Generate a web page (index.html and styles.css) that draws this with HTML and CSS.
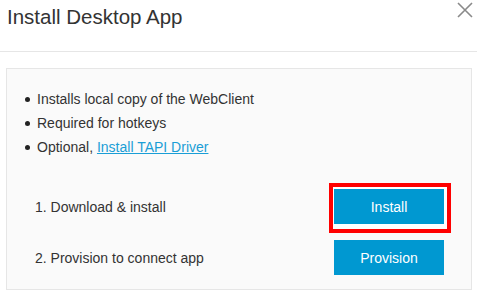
FILE: index.html
```html
<!DOCTYPE html>
<html lang="en">
<head>
    <meta charset="UTF-8">
    <title>Install Desktop App</title>
    <link rel="stylesheet" href="styles.css">
</head>
<body>
    <div class="dialog">
        <div class="dialog-header">
            <h1 class="dialog-title">Install Desktop App</h1>
            <span class="close-btn" aria-label="Close">
                <svg width="16" height="16" viewBox="0 0 16 16">
                    <path d="M1 1 L15 15 M15 1 L1 15" stroke="#8a8a8a" stroke-width="1.6" fill="none"/>
                </svg>
            </span>
        </div>
        <div class="panel">
            <ul class="features">
                <li>Installs local copy of the WebClient</li>
                <li>Required for hotkeys</li>
                <li>Optional, <a href="#" class="link">Install TAPI Driver</a></li>
            </ul>
            <div class="step first">
                <span class="step-label">1. Download &amp; install</span>
                <span class="highlight"><button class="btn">Install</button></span>
            </div>
            <div class="step">
                <span class="step-label">2. Provision to connect app</span>
                <button class="btn">Provision</button>
            </div>
        </div>
    </div>
</body>
</html>
```

FILE: styles.css
```css
body {
    margin: 0;
    font-family: 'Liberation Sans', Arial, sans-serif;
    color: #333;
    background: #fff;
}
.dialog {
    width: 477px;
}
.dialog-header {
    display: flex;
    justify-content: space-between;
    align-items: flex-start;
    height: 52px;
    border-bottom: 1px solid #e6e6e6;
    box-sizing: border-box;
    padding: 0 4px 0 7px;
}
.dialog-title {
    margin: 5px 0 0 0;
    font-size: 20.5px;
    font-weight: normal;
    line-height: 24px;
    color: #333;
}
.close-btn {
    margin-top: 2px;
    width: 16px;
    height: 16px;
    cursor: pointer;
}
.panel {
    margin: 16px 0 0 6px;
    width: 466px;
    height: 222px;
    box-sizing: border-box;
    background: #fafafa;
    border: 1px solid #e6e6e6;
    padding: 18px 27px 0 28px;
}
.features {
    margin: 0;
    padding-left: 2px;
    list-style: none;
    font-size: 14px;
    line-height: 24px;
}
.features li::before {
    content: "";
    display: inline-block;
    width: 5px;
    height: 5px;
    border-radius: 50%;
    background: #222;
    margin: 0 7px 2px -12px;
    vertical-align: middle;
}
.link {
    color: #1a9ed6;
    text-decoration: underline;
}
.step {
    display: flex;
    justify-content: space-between;
    align-items: center;
    margin-top: 16px;
    font-size: 14px;
}
.step.first {
    margin-top: 30px;
}
.step-label {
    color: #333;
}
.btn {
    display: block;
    width: 110px;
    height: 35px;
    border: none;
    background: #0098d1;
    color: #fff;
    font-family: 'Liberation Sans', Arial, sans-serif;
    font-size: 14px;
    padding: 0;
    cursor: pointer;
}
/* red marker drawn round the install button */
.highlight {
    position: relative;
    z-index: 0;
    display: block;
}
.highlight::before {
    content: "";
    position: absolute;
    left: -5px;
    top: -6px;
    right: -7px;
    bottom: -9px;
    border: 4px solid #ff0000;
    background: #fff;
    z-index: -1;
}
```
